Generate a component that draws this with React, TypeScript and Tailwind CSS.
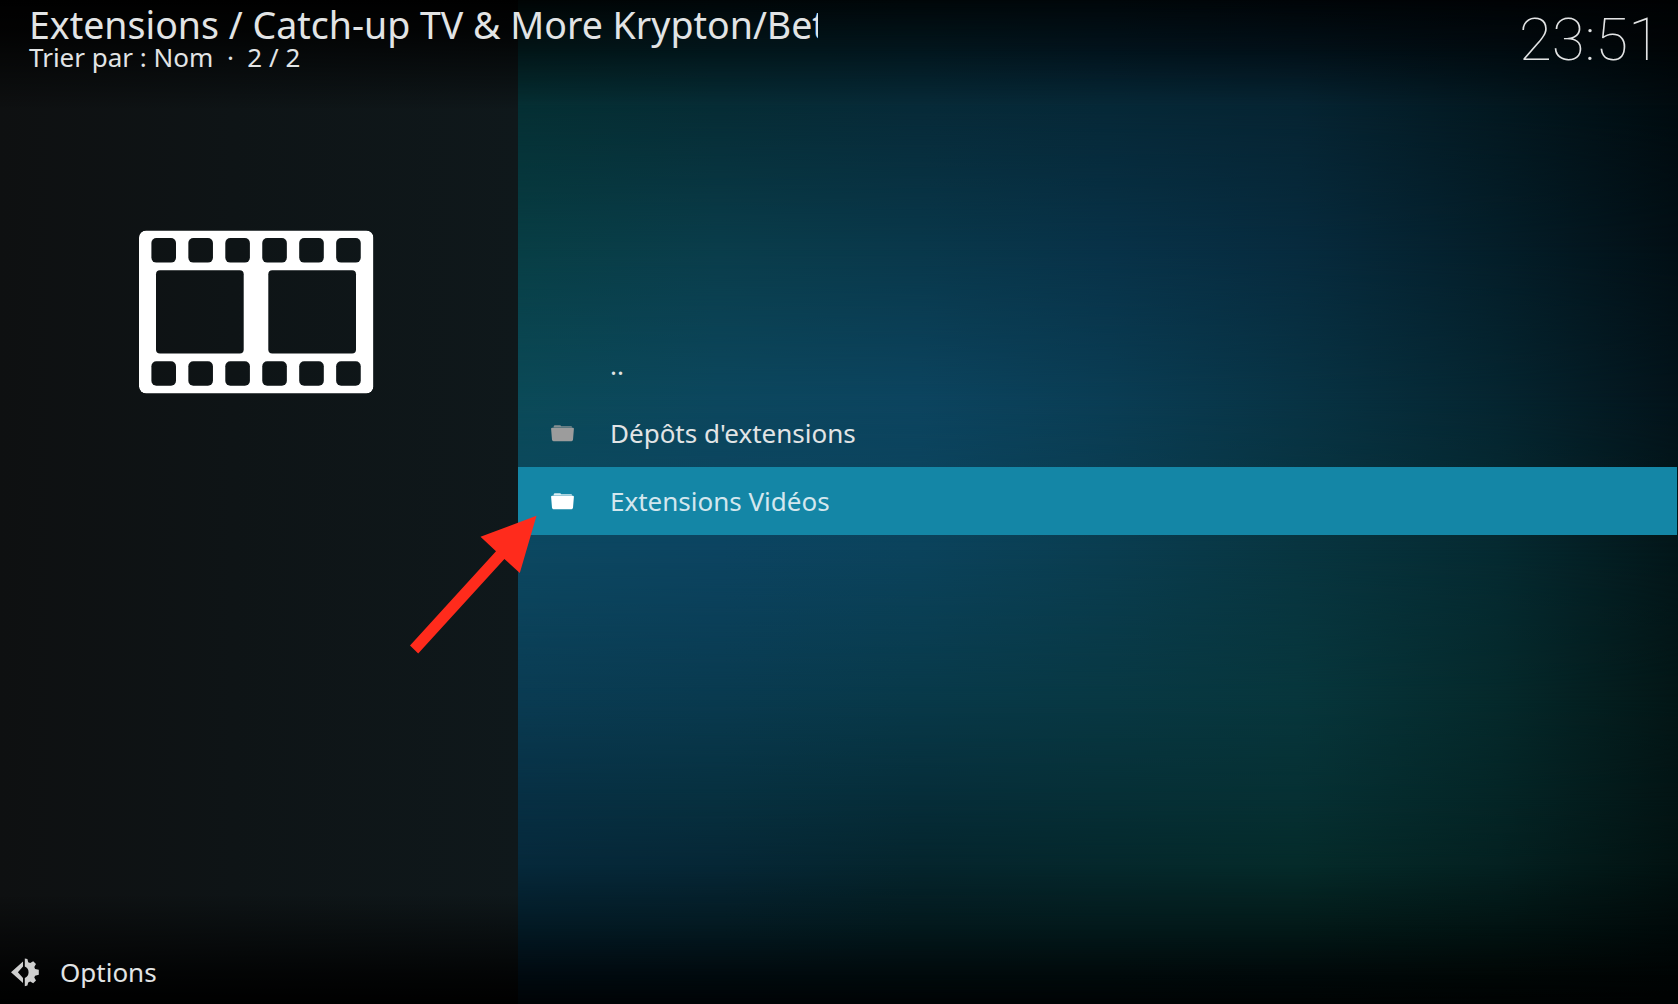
const W = 1160;

// Horizontal colour bands of the wallpaper; each band cross-fades into the next.
const STOPS = [0, 200, 400, 590, 780, 980, 1160];
const BANDS: { y: number; colors: string[] }[] = [
  { y: 0, colors: ["#000505", "#000608", "#000709", "#00070a", "#000508", "#000305", "#000203"] },
  { y: 50, colors: ["#021517", "#02161b", "#02161d", "#02131c", "#021018", "#010b10", "#010507"] },
  { y: 105, colors: ["#052f33", "#062c35", "#072a38", "#062837", "#062432", "#031820", "#010b0f"] },
  { y: 250, colors: ["#083e45", "#0a3d4b", "#09384b", "#083248", "#072b3e", "#041e29", "#020f15"] },
  { y: 400, colors: ["#0b4a58", "#0c475e", "#0c445f", "#0a3d54", "#083344", "#052530", "#03131a"] },
  { y: 550, colors: ["#0c4861", "#0c4461", "#0b435c", "#0a3d50", "#083540", "#052a31", "#031619"] },
  { y: 700, colors: ["#0a3b52", "#093a4f", "#083949", "#083843", "#07363c", "#05292b", "#031616"] },
  { y: 800, colors: ["#072f43", "#07303f", "#062d39", "#062f36", "#063033", "#042526", "#031414"] },
  { y: 865, colors: ["#06293b", "#062736", "#05252d", "#05282c", "#052b2a", "#042121", "#021211"] },
  { y: 925, colors: ["#031a25", "#041a22", "#03191d", "#031a1c", "#031a19", "#021413", "#010a0a"] },
  { y: 975, colors: ["#010a10", "#010a0e", "#010a0c", "#010a0b", "#01090a", "#010706", "#000404"] },
  { y: 1004, colors: ["#000406", "#000406", "#000405", "#000405", "#000404", "#000303", "#000202"] },
];

function Wallpaper() {
  return (
    <div className="relative h-full flex-1 overflow-hidden">
      {BANDS.map((b, i) => {
        const fade = i === 0 ? undefined : `linear-gradient(to bottom, transparent ${BANDS[i - 1].y}px, #000 ${b.y}px)`;
        return (
          <div
            key={b.y}
            className="absolute inset-0"
            style={{
              backgroundImage: `linear-gradient(to right, ${b.colors
                .map((c, k) => `${c} ${(STOPS[k] / W) * 100}%`)
                .join(", ")})`,
              maskImage: fade,
            }}
          />
        );
      })}
    </div>
  );
}

function FilmIcon() {
  const holes = [0, 1, 2, 3, 4, 5];
  return (
    <svg width="235" height="164" viewBox="0 0 235 164" className="block">
      <defs>
        <mask id="film">
          <rect y=".4" width="234.4" height="163.2" rx="7" fill="#fff" />
          {holes.map((i) => (
            <g key={i} fill="#000">
              <rect x={12.4 + i * 36.95} y="8" width="24.6" height="24.6" rx="5" />
              <rect x={12.4 + i * 36.95} y="131.2" width="24.6" height="24.6" rx="5" />
            </g>
          ))}
          <rect x="17" y="40.3" width="87.7" height="83.2" rx="4" fill="#000" />
          <rect x="129.3" y="40.3" width="87.7" height="83.2" rx="4" fill="#000" />
        </mask>
      </defs>
      <rect y=".4" width="234.4" height="163.2" rx="7" fill="#fff" mask="url(#film)" />
    </svg>
  );
}

function FolderIcon({ color }: { color: string }) {
  return (
    <svg width="23" height="17" viewBox="0 0 23 17" className="block" fill={color}>
      <path d="M2.6 1.7 Q2.8 .3 4 .3 H8.8 Q10 .3 10.2 1.3 H20 Q21 1.3 21.1 2.1 L21.1 2.5 H2.5Z" opacity=".85" />
      <path d="M1.2 2.7 H21.8 Q23 2.7 22.9 3.8 L22 14.8 Q21.8 16.2 20.5 16.2 H2.5 Q1.2 16.2 1 14.8 L.1 3.8 Q0 2.7 1.2 2.7Z" />
    </svg>
  );
}

function OptionsIcon() {
  return (
    <svg width="29" height="29" viewBox="0 0 29 29" className="block" fill="#cfcfcf">
      <path d="M12 3.6 V8.6 L6.9 14.3 L12 20 V25 L0 14.3Z" />
      <path d="M13.8 .4 L16.4 1 L17.2 4.2 L19.2 5 L22.2 3.3 L25 6 L23.3 9 L24.1 10.9 L27.8 11.8 V16.8 L24.1 17.7 L23.3 19.6 L25 22.6 L22.2 25.3 L19.2 23.6 L17.2 24.4 L16.4 27.6 L13.8 28.2 V20 A6.2 6.2 0 0 0 13.8 8.6Z" />
    </svg>
  );
}

const ITEMS = [
  { label: "..", icon: false, active: false },
  { label: "Dépôts d'extensions", icon: true, active: false },
  { label: "Extensions Vidéos", icon: true, active: true },
];

export default function App() {
  return (
    <div className="relative h-[1004px] w-[1678px] overflow-hidden bg-black font-['Noto_Sans',sans-serif] text-[#e2e4e5]">
      <div className="absolute inset-0 flex">
        <div className="h-full w-[518px] bg-[linear-gradient(to_bottom,#000_0%,rgba(0,0,0,.85)_3%,transparent_11%,transparent_89%,rgba(0,0,0,.8)_97%,#000_100%),linear-gradient(to_right,#0e1011_0%,#0e1416_45%,#0f181b_100%)]" />
        <Wallpaper />
      </div>

      <div className="relative flex h-full flex-col">
        <header className="flex h-[90px] justify-between pr-[17px] pl-[29px]">
          <div>
            <h1 className="w-[789px] overflow-hidden text-[37.5px] leading-[50px] whitespace-nowrap">
              Extensions / Catch-up TV &amp; More Krypton/Beta
            </h1>
            <p className="-mt-[7px] text-[26px] leading-[28px] whitespace-pre">{"Trier par : Nom  ·  2 / 2"}</p>
          </div>
          <time className="pt-[5px] font-['Roboto',sans-serif] text-[60px] leading-[70px] font-thin">23:51</time>
        </header>

        <main className="flex flex-1">
          <aside className="w-[518px] pt-[140px] pl-[139px]">
            <FilmIcon />
          </aside>
          <ul className="flex-1 pt-[241px] pr-px">
            {ITEMS.map((it) => (
              <li
                key={it.label}
                className={
                  it.active
                    ? "flex h-[68px] items-center bg-[#1486a6] pl-[33px] text-[#d3e7ee]"
                    : "flex h-[68px] items-center pl-[33px]"
                }
              >
                <span className="w-[59px]">
                  {it.icon && <FolderIcon color={it.active ? "#ffffff" : "#9c9c9c"} />}
                </span>
                <span className="text-[26px] leading-[34px]">{it.label}</span>
              </li>
            ))}
          </ul>
        </main>

        <footer className="flex h-[62px] items-center gap-[20px] pb-[2px] pl-[11px]">
          <OptionsIcon />
          <span className="text-[26px] leading-[34px]">Options</span>
        </footer>
      </div>

      <svg className="absolute top-[510px] left-[405px]" width="140" height="150" viewBox="405 510 140 150">
        <path d="M536.5 515.7 L480.5 536.8 L496 551.3 L410 645.6 L418.2 653.4 L504.4 559 L519.8 573Z" fill="#ff2b1c" />
      </svg>
    </div>
  );
}
